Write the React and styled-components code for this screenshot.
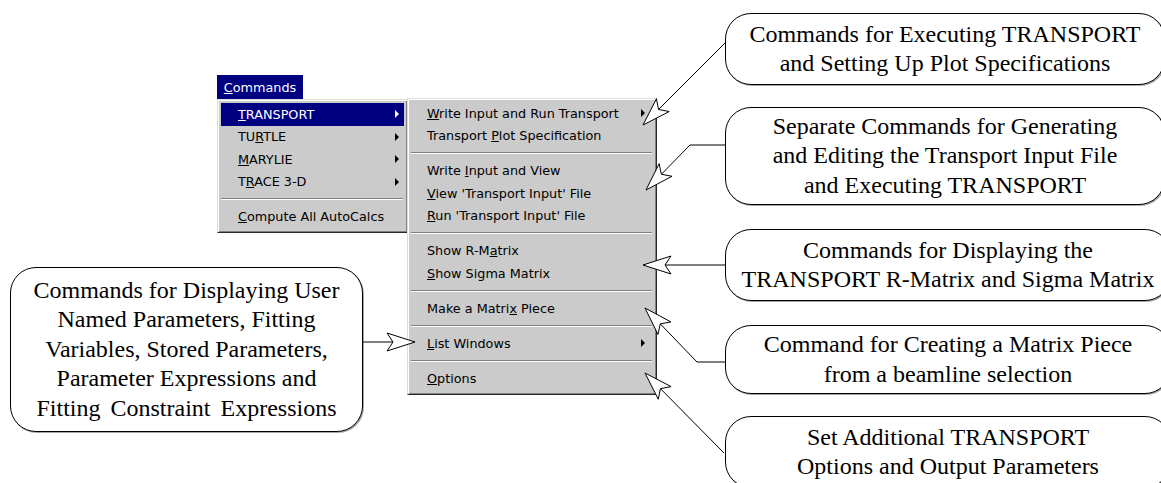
import React from 'react';
import styled, { createGlobalStyle } from 'styled-components';

const Global = createGlobalStyle`
  html, body { margin: 0; padding: 0; background: #fff; }
  body { width: 1161px; height: 483px; overflow: hidden; }
`;

const Canvas = styled.div`
  position: relative;
  width: 1161px;
  height: 483px;
  overflow: hidden;
  background: #fff;
`;

/* ---------- Windows classic menu ---------- */

const MenuArea = styled.div`
  position: absolute;
  left: 217px;
  top: 75px;
  display: flex;
  flex-direction: column;
  align-items: flex-start;
  font-family: "DejaVu Sans", "Liberation Sans", sans-serif;
  font-size: 12.8px;
  color: #000;
  z-index: 2;
`;

const MenuTitle = styled.div`
  width: 86px;
  height: 24px;
  background: #000080;
  color: #fff;
  display: flex;
  align-items: center;
  justify-content: center;
`;

const MenuRow = styled.div`
  display: flex;
  align-items: flex-start;
`;

const Panel = styled.div`
  box-sizing: border-box;
  width: ${(p) => p.$w}px;
  margin-left: ${(p) => p.$dx || 0}px;
  margin-top: ${(p) => p.$dy || 0}px;
  padding: 3px 3px 4px;
  background: #cbcbcb;
  border: 1px solid;
  border-color: #dedede #2a2a2a #2a2a2a #dedede;
  box-shadow: inset 1px 1px 0 #ffffff, inset -1px -1px 0 #808080;
  display: flex;
  flex-direction: column;
`;

const Item = styled.div`
  height: 22.5px;
  display: flex;
  align-items: center;
  padding-left: ${(p) => p.$indent}px;
  padding-right: ${(p) => p.$gap}px;
  background: ${(p) => (p.$active ? '#000080' : 'transparent')};
  color: ${(p) => (p.$active ? '#fff' : '#000')};
  white-space: nowrap;
`;

const Label = styled.span`
  flex: 1;
`;

const Key = styled.u`
  text-decoration: underline;
  text-underline-offset: 1px;
`;

const SubArrow = styled.span`
  width: 0;
  height: 0;
  border-left: 4px solid currentColor;
  border-top: 4px solid transparent;
  border-bottom: 4px solid transparent;
`;

const Separator = styled.div`
  height: 12.5px;
  display: flex;
  flex-direction: column;
  justify-content: center;
  padding: 0 1px 0 0;
  &::before {
    content: '';
    display: block;
    height: 1px;
    background: #808080;
  }
  &::after {
    content: '';
    display: block;
    height: 1px;
    background: #ffffff;
  }
`;

/* ---------- Callout boxes ---------- */

const Callout = styled.div`
  position: absolute;
  left: ${(p) => p.$x}px;
  top: ${(p) => p.$y}px;
  width: ${(p) => p.$w}px;
  height: ${(p) => p.$h}px;
  box-sizing: border-box;
  border: 1px solid #000;
  border-radius: 26px;
  box-shadow: 1px 1px 0 rgba(0, 0, 0, 0.35);
  background: #fff;
  display: flex;
  flex-direction: column;
  align-items: center;
  justify-content: center;
  font-family: "Liberation Serif", "Times New Roman", serif;
  font-size: 24px;
  line-height: 29.5px;
  color: #000;
  white-space: nowrap;
`;

const Line = styled.span`
  display: block;
  text-align: center;
  word-spacing: ${(p) => p.$spread || 0}px;
`;

const Overlay = styled.svg`
  position: absolute;
  left: 0;
  top: 0;
  width: 1161px;
  height: 483px;
  pointer-events: none;
  z-index: 3;
`;

/* ---------- data ---------- */

const mainItems = [
  { pre: '', key: 'T', post: 'RANSPORT', sub: true, active: true },
  { pre: 'TU', key: 'R', post: 'TLE', sub: true },
  { pre: '', key: 'M', post: 'ARYLIE', sub: true },
  { pre: 'T', key: 'R', post: 'ACE 3-D', sub: true },
  'sep',
  { pre: '', key: 'C', post: 'ompute All AutoCalcs' },
];

const subItems = [
  { pre: '', key: 'W', post: 'rite Input and Run Transport', sub: true },
  { pre: 'Transport ', key: 'P', post: 'lot Specification' },
  'sep',
  { pre: 'Write ', key: 'I', post: 'nput and View' },
  { pre: '', key: 'V', post: "iew 'Transport Input' File" },
  { pre: '', key: 'R', post: "un 'Transport Input' File" },
  'sep',
  { pre: 'Show R-M', key: 'a', post: 'trix' },
  { pre: '', key: 'S', post: 'how Sigma Matrix' },
  'sep',
  { pre: 'Make a Matri', key: 'x', post: ' Piece' },
  'sep',
  { pre: '', key: 'L', post: 'ist Windows', sub: true },
  'sep',
  { pre: '', key: 'O', post: 'ptions' },
];

function MenuList({ items, indent, gap }) {
  return items.map((it, i) =>
    it === 'sep' ? (
      <Separator key={i} />
    ) : (
      <Item key={i} $active={it.active} $indent={indent} $gap={gap}>
        <Label>
          {it.pre}
          <Key>{it.key}</Key>
          {it.post}
        </Label>
        {it.sub && <SubArrow />}
      </Item>
    )
  );
}

const callouts = [
  { x: 725, y: 13, w: 440, h: 72, lines: ['Commands for Executing TRANSPORT', 'and Setting Up Plot Specifications'] },
  {
    x: 725, y: 107, w: 440, h: 98,
    lines: ['Separate Commands for Generating', 'and Editing the Transport Input File', 'and Executing TRANSPORT'],
  },
  { x: 725, y: 229, w: 446, h: 72, lines: ['Commands for Displaying the', 'TRANSPORT R-Matrix and Sigma Matrix'] },
  { x: 725, y: 325, w: 446, h: 69, lines: ['Command for Creating a Matrix Piece', 'from a beamline selection'] },
  { x: 725, y: 416, w: 446, h: 72, lines: ['Set Additional TRANSPORT', 'Options and Output Parameters'] },
  {
    x: 10, y: 267, w: 353, h: 165,
    lines: [
      'Commands for Displaying User',
      'Named Parameters, Fitting',
      'Variables, Stored Parameters,',
      'Parameter Expressions and',
      { text: 'Fitting Constraint Expressions', spread: 4 },
    ],
  },
];

/* arrow paths: list of points, last point is the tip */
const arrows = [
  [[725, 43], [643, 125]],
  [[725, 145], [690, 145], [646, 190]],
  [[725, 265], [643, 265]],
  [[725, 362], [697, 362], [645, 308]],
  [[724, 453], [645, 373]],
  [[363, 342], [415, 342]],
];

function Arrow({ pts }) {
  const L = 28, W = 9, N = 6;
  const [tx, ty] = pts[pts.length - 1];
  const [fx, fy] = pts[pts.length - 2];
  const len = Math.hypot(fx - tx, fy - ty);
  const ux = (fx - tx) / len, uy = (fy - ty) / len;
  const nx = -uy, ny = ux;
  const b1 = [tx + ux * L + nx * W, ty + uy * L + ny * W];
  const b2 = [tx + ux * L - nx * W, ty + uy * L - ny * W];
  const notch = [tx + ux * (L - N), ty + uy * (L - N)];
  const shaft = [...pts.slice(0, -1), notch].map((p) => p.join(',')).join(' ');
  const head = [[tx, ty], b1, notch, b2].map((p) => p.join(',')).join(' ');
  return (
    <g>
      <polyline points={shaft} fill="none" stroke="#000" strokeWidth="1" />
      <polygon points={head} fill="#fff" stroke="#000" strokeWidth="1" strokeLinejoin="miter" />
    </g>
  );
}

export default function App() {
  return (
    <>
      <Global />
      <Canvas>
        <MenuArea>
          <MenuTitle>
            <span>
              <Key>C</Key>ommands
            </span>
          </MenuTitle>
          <MenuRow>
            <Panel $w={191}>
              <MenuList items={mainItems} indent={17} gap={5} />
            </Panel>
            <Panel $w={250} $dx={-1} $dy={-1}>
              <MenuList items={subItems} indent={16} gap={8} />
            </Panel>
          </MenuRow>
        </MenuArea>

        {callouts.map((c, i) => (
          <Callout key={i} $x={c.x} $y={c.y} $w={c.w} $h={c.h}>
            {c.lines.map((l, j) =>
              typeof l === 'string' ? (
                <Line key={j}>{l}</Line>
              ) : (
                <Line key={j} $spread={l.spread}>
                  {l.text}
                </Line>
              )
            )}
          </Callout>
        ))}

        <Overlay viewBox="0 0 1161 483">
          {arrows.map((a, i) => (
            <Arrow key={i} pts={a} />
          ))}
        </Overlay>
      </Canvas>
    </>
  );
}
